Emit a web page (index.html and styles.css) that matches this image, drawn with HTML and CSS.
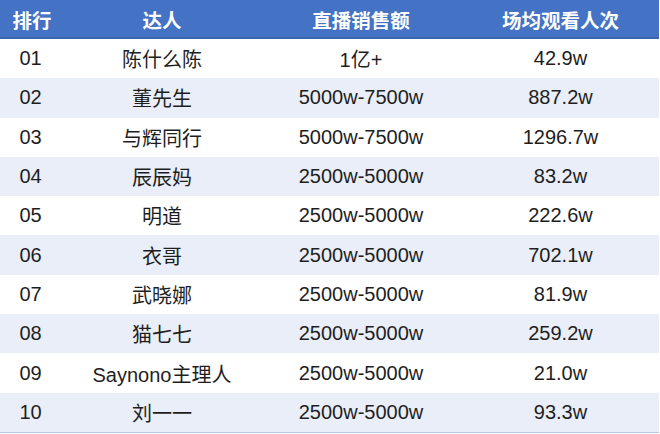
FILE: index.html
```html
<!DOCTYPE html>
<html lang="zh">
<head>
<meta charset="utf-8">
<title>达人排行</title>
<link rel="stylesheet" href="styles.css">
</head>
<body>
<div class="table">
  <div class="row head">
    <div class="c1">排行</div><div class="c2">达人</div><div class="c3">直播销售额</div><div class="c4">场均观看人次</div>
  </div>
  <div class="row"><div class="c1">01</div><div class="c2">陈什么陈</div><div class="c3">1亿+</div><div class="c4">42.9w</div></div>
  <div class="row alt"><div class="c1">02</div><div class="c2">董先生</div><div class="c3">5000w-7500w</div><div class="c4">887.2w</div></div>
  <div class="row"><div class="c1">03</div><div class="c2">与辉同行</div><div class="c3">5000w-7500w</div><div class="c4">1296.7w</div></div>
  <div class="row alt"><div class="c1">04</div><div class="c2">辰辰妈</div><div class="c3">2500w-5000w</div><div class="c4">83.2w</div></div>
  <div class="row"><div class="c1">05</div><div class="c2">明道</div><div class="c3">2500w-5000w</div><div class="c4">222.6w</div></div>
  <div class="row alt"><div class="c1">06</div><div class="c2">衣哥</div><div class="c3">2500w-5000w</div><div class="c4">702.1w</div></div>
  <div class="row"><div class="c1">07</div><div class="c2">武晓娜</div><div class="c3">2500w-5000w</div><div class="c4">81.9w</div></div>
  <div class="row alt"><div class="c1">08</div><div class="c2">猫七七</div><div class="c3">2500w-5000w</div><div class="c4">259.2w</div></div>
  <div class="row"><div class="c1">09</div><div class="c2">Saynono主理人</div><div class="c3">2500w-5000w</div><div class="c4">21.0w</div></div>
  <div class="row alt last"><div class="c1">10</div><div class="c2">刘一一</div><div class="c3">2500w-5000w</div><div class="c4">93.3w</div></div>
</div>
</body>
</html>
```
FILE: styles.css
```css
html, body {
  margin: 0;
  padding: 0;
  background: #ffffff;
}
.table {
  width: 659px;
  display: flex;
  flex-direction: column;
  font-family: "Liberation Sans", "Noto Sans CJK SC", sans-serif;
  font-size: 20px;
  color: #1e1e1e;
}
.row {
  display: grid;
  grid-template-columns: 64px 196px 202px 197px;
  height: 39.3px;
  align-items: center;
  text-align: center;
}
.row > div {
  white-space: nowrap;
}
.row .c1 {
  padding-right: 3px;
}
.head {
  background: #4472c4;
  border-bottom: 2px solid #3c66b1;
  color: #ffffff;
  font-weight: bold;
  font-size: 19.5px;
  padding-top: 2px;
  box-sizing: border-box;
  height: 39px;
}
.head .c1 {
  padding-right: 0;
}
.alt {
  background: #e9eef8;
}
.last {
  border-bottom: 1px solid #b6c8e8;
}
```
